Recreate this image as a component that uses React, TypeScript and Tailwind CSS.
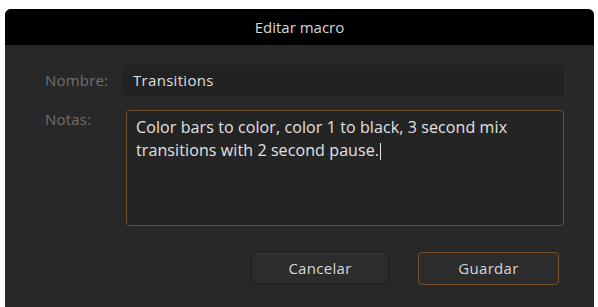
export default function App() {
  return (
    <div className="w-[598px] h-[307px] bg-white pt-[9px] pl-[5px] pr-[4px] overflow-hidden" style={{ fontFamily: '"Open Sans", "Noto Sans", sans-serif' }}>
      <div className="h-[300px] rounded-t-[6px] bg-[#282828] flex flex-col overflow-hidden">
        {/* Title bar */}
        <div className="h-[36px] bg-black flex items-center justify-center shrink-0">
          <span className="text-[15px] text-[#d8d8d8]">Editar macro</span>
        </div>

        <div className="flex flex-col pl-[40px] pr-[30px] pt-[20px]">
          {/* Nombre */}
          <div className="flex items-center">
            <label className="w-[78px] text-[15px] tracking-[0.2px] text-[#6f6f6f]">Nombre:</label>
            <div className="flex-1 h-[31px] bg-[#222222] rounded-[3px] flex items-center px-[10px] text-[15px] tracking-[0.3px] text-[#dedede]">
              Transitions
            </div>
          </div>

          {/* Notas */}
          <div className="flex mt-[14px]">
            <label className="w-[81px] text-[15px] tracking-[0.2px] text-[#6f6f6f] -mt-[2px]">Notas:</label>
            <div className="flex-1 h-[116px] bg-[#242424] rounded-[4px] border border-[#74502d] px-[9px] pt-[5px] text-[16px] tracking-[0.1px] leading-[23px] text-[#e2e2e2]">
              Color bars to color, color 1 to black, 3 second mix transitions with 2 second pause.
              <span className="inline-block w-px h-[17px] bg-[#e2e2e2] align-middle ml-px" />
            </div>
          </div>

          {/* Buttons */}
          <div className="flex justify-end gap-[29px] mt-[26px] pr-[5px]">
            <button className="w-[138px] h-[32px] rounded-[4px] bg-[#2c2c2c] border border-[#1c1c1c] shadow-[inset_0_1px_0_#3a3a3a] text-[15px] tracking-[0.3px] text-[#d6d6d6]">
              Cancelar
            </button>
            <button className="w-[141px] h-[33px] rounded-[4px] bg-[#2c2c2c] border border-[#74502d] text-[15px] tracking-[0.3px] text-[#d6d6d6]">
              Guardar
            </button>
          </div>
        </div>
      </div>
    </div>
  );
}
